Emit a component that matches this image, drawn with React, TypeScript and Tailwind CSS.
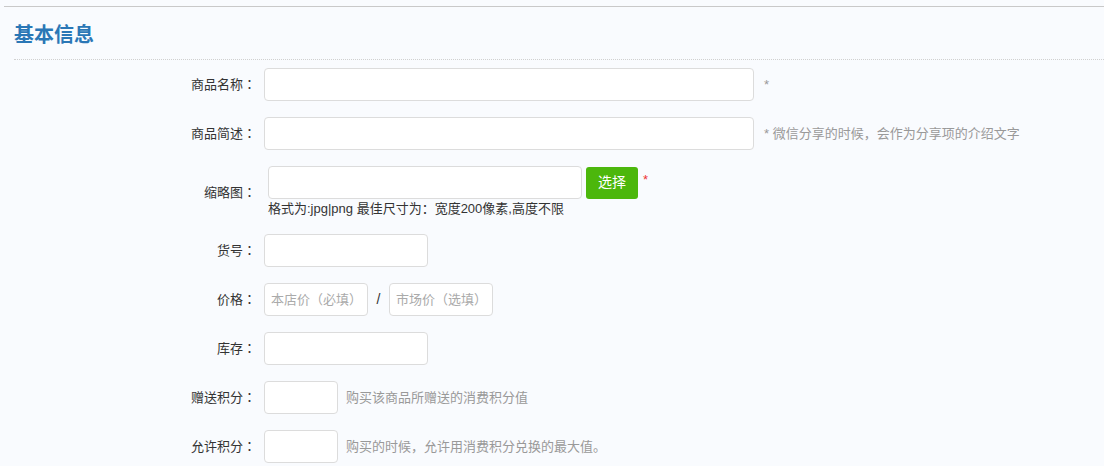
import React from "react";

const font = { fontFamily: '"Liberation Sans", "Noto Sans CJK SC", sans-serif' };

function Colon() {
  return (
    <span className="inline-block w-[13px] text-center" style={{ fontFamily: '"Noto Sans CJK TC", sans-serif' }}>
      ：
    </span>
  );
}

function Label({ children }: { children: React.ReactNode }) {
  return (
    <div className="w-[242px] shrink-0 text-right text-[13px] text-[#333]">
      {children}
      <Colon />
    </div>
  );
}

function Input({ w, placeholder }: { w: string; placeholder?: string }) {
  return (
    <input
      placeholder={placeholder}
      className={`${w} h-[33px] rounded-[4px] border border-[#dcdcdc] bg-white px-[6px] text-[13px] text-[#333] placeholder:text-[#aaa] outline-none`}
    />
  );
}

export default function App() {
  return (
    <div className="min-h-[466px] w-[1104px] bg-[#f9fbfe] pt-[6px] pl-[4px]" style={font}>
      <div className="border-t border-[#c9c9c9]">
        <div className="ml-[10px]">
          <div className="flex h-[53px] items-center border-b border-dotted border-[#d0d0d0] pt-[3px]">
            <h2 className="text-[20px] font-bold text-[#2a77b6] leading-none">基本信息</h2>
          </div>
          <div className="flex flex-col gap-4 pt-[8px]">
            <div className="flex items-center">
              <Label>商品名称</Label>
              <div className="ml-[8px] flex items-center">
                <Input w="w-[490px]" />
                <span className="ml-[10px] text-[13px] text-[#999]">*</span>
              </div>
            </div>
            <div className="flex items-center">
              <Label>商品简述</Label>
              <div className="ml-[8px] flex items-center">
                <Input w="w-[490px]" />
                <span className="ml-[10px] text-[13px] text-[#999]">* 微信分享的时候，会作为分享项的介绍文字</span>
              </div>
            </div>
            <div className="flex items-center">
              <Label>缩略图</Label>
              <div className="ml-[12px] flex flex-col">
                <div className="flex items-center">
                  <Input w="w-[314px]" />
                  <button className="ml-[4px] h-[32px] w-[52px] rounded-[3px] bg-[#4cb70c] text-[14px] text-white">
                    选择
                  </button>
                  <span className="ml-[5px] -mt-[6px] text-[13px] text-[#e33]">*</span>
                </div>
                <div className="mt-[1px] h-[18px] text-[13px] leading-[18px] text-[#333]">
                  格式为:jpg|png 最佳尺寸为：宽度200像素,高度不限
                </div>
              </div>
            </div>
            <div className="flex items-center">
              <Label>货号</Label>
              <div className="ml-[8px] flex items-center">
                <Input w="w-[164px]" />
              </div>
            </div>
            <div className="flex items-center">
              <Label>价格</Label>
              <div className="ml-[8px] flex items-center">
                <Input w="w-[104px]" placeholder="本店价（必填）" />
                <span className="w-[21px] text-center text-[14px] text-[#333]">/</span>
                <Input w="w-[104px]" placeholder="市场价（选填）" />
              </div>
            </div>
            <div className="flex items-center">
              <Label>库存</Label>
              <div className="ml-[8px] flex items-center">
                <Input w="w-[164px]" />
              </div>
            </div>
            <div className="flex items-center">
              <Label>赠送积分</Label>
              <div className="ml-[8px] flex items-center">
                <Input w="w-[74px]" />
                <span className="ml-[8px] text-[13px] text-[#999]">购买该商品所赠送的消费积分值</span>
              </div>
            </div>
            <div className="flex items-center">
              <Label>允许积分</Label>
              <div className="ml-[8px] flex items-center">
                <Input w="w-[74px]" />
                <span className="ml-[8px] text-[13px] text-[#999]">购买的时候，允许用消费积分兑换的最大值。</span>
              </div>
            </div>
          </div>
        </div>
      </div>
    </div>
  );
}
